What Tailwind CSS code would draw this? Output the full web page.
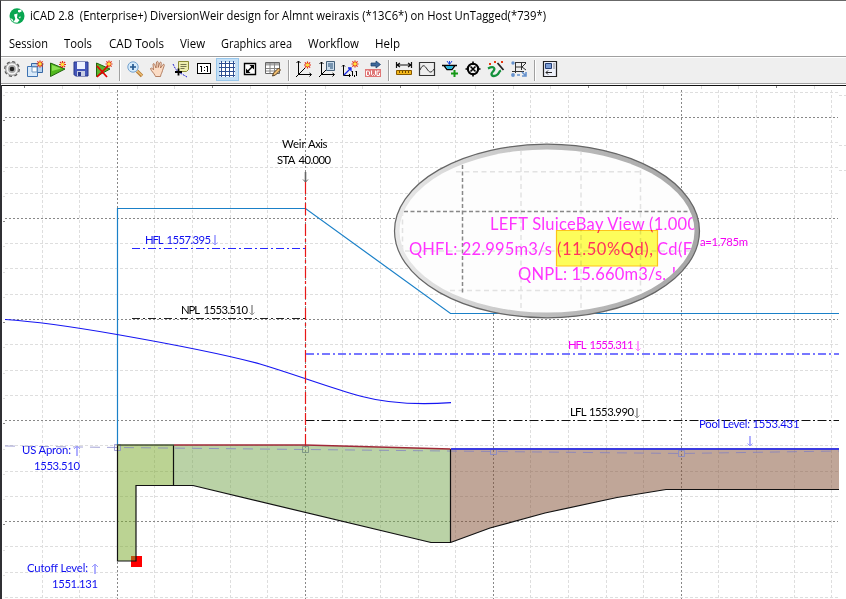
<!DOCTYPE html>
<html lang="en">
<head>
<meta charset="utf-8">
<title>iCAD 2.8</title>
<script src="https://cdn.jsdelivr.net/npm/@tailwindcss/browser@4"></script>
</head>
<body class="w-[846px] h-[599px] overflow-hidden bg-white font-['Open_Sans','Noto_Sans',sans-serif] text-black">
<div class="flex h-[599px] w-[846px] flex-col border-l border-l-[#303034] border-t border-t-[#686868]">
  <header class="flex h-[31px] shrink-0 items-start pl-[8px] pt-[7px]">
    <svg class="h-4 w-4 shrink-0" viewBox="0 0 16 16"><ellipse cx="8" cy="8" rx="7.5" ry="7.8" fill="#08a650"/><path d="M9 2.2l3-.7.8 1.8-2.2 1.2-1.6-.6zM5 6.500l3.500-1-.5 4.500 2.500 2.200-2.200 2.600-4-.6 2-3.200z" fill="#fff"/><path d="M1 10l2.500 1 1.300 2.800-1.600-.6zM9.500 9l2.500-.6-1 2z" fill="#dff5e6"/></svg>
    <h1 class="ml-[5px] text-[12px] leading-4"><svg class="block h-[16px] w-[520px] overflow-visible"><text class="whitespace-pre" x="0" y="12" textLength="516" lengthAdjust="spacingAndGlyphs">iCAD 2.8  (Enterprise+) DiversionWeir design for Almnt weiraxis (*13C6*) on Host UnTagged(*739*)</text></svg></h1>
  </header>
  <nav class="flex h-[24px] shrink-0 items-center pl-[8px] text-[12px]">
    <svg class="block h-[16px] w-[400px] overflow-visible">
      <text x="0" y="12" textLength="39" lengthAdjust="spacingAndGlyphs">Session</text>
      <text x="55" y="12" textLength="28" lengthAdjust="spacingAndGlyphs">Tools</text>
      <text x="100" y="12" textLength="55" lengthAdjust="spacingAndGlyphs">CAD Tools</text>
      <text x="171" y="12" textLength="25" lengthAdjust="spacingAndGlyphs">View</text>
      <text x="212" y="12" textLength="71" lengthAdjust="spacingAndGlyphs">Graphics area</text>
      <text x="299" y="12" textLength="51" lengthAdjust="spacingAndGlyphs">Workflow</text>
      <text x="366" y="12" textLength="25" lengthAdjust="spacingAndGlyphs">Help</text></svg>
  </nav>
  <div class="flex h-[28px] shrink-0 border-b border-t border-[#a0a0a0] bg-[#efefef] pt-px shadow-[inset_0_1px_0_#fff] [&>b]:flex [&>b]:h-[23px] [&>b]:w-[23px] [&>b]:shrink-0 [&>b]:items-start [&>b]:justify-start [&>i]:mx-[3px] [&>i]:mt-[2px] [&>i]:h-[21px] [&>i]:w-[2px] [&>i]:border-l [&>i]:border-r [&>i]:border-l-[#a0a0a0] [&>i]:border-r-white [&_svg]:ml-[3px] [&_svg]:mt-[3px] [&_svg]:h-4 [&_svg]:w-4 [&_svg]:shrink-0 [&_svg]:overflow-visible">
    <b><svg viewBox="0 0 16 16"><circle cx="8" cy="8" r="7.300" fill="none" stroke="#555" stroke-width="1.300" stroke-dasharray="3.200 2.530"/><circle cx="8" cy="8" r="6.300" fill="#f2f2f2" stroke="#707070" stroke-width=".8"/><circle cx="8" cy="8" r="3.900" fill="#aaa"/><circle cx="8" cy="8" r="2.300" fill="#222"/></svg></b>
    <b><svg viewBox="0 0 16 16"><path d="M4.500 2.500h11v9h-11z" fill="#b7d3ef" stroke="#3767a3"/><path d="M.5 5.500h10v10H.5z" fill="#d9eafa" stroke="#3e73b2"/><path d="M5 6h5v5H5z" fill="#fff" stroke="#7298c0"/><use href="#star" x="13" y="3"/></svg></b>
    <b><svg viewBox="0 0 16 16"><path d="M.5 2v13.500L15 8z" fill="#52b81e" stroke="#22650e"/><path d="M2 4v6l9-2.500z" fill="#8de052"/><use href="#star" x="12.500" y="3.500"/></svg></b>
    <b><svg viewBox="0 0 16 16"><path d="M1 1h14v14H2.500L1 13.500z" fill="#4557b9" stroke="#27368b"/><path d="M4 1h8v7H4z" fill="#edf2ff"/><path d="M4 10h8v5H4z" fill="#c9cfe5"/><path d="M5 11h3v4H5z" fill="#27368b"/></svg></b>
    <b><svg viewBox="0 0 16 16"><path d="M.5 2v13.500L14 8z" fill="#5cb32e" stroke="#22650e"/><use href="#star" x="13" y="3"/><path d="M1 5l10 11M12 5L1 16" stroke="#e50000" stroke-width="1.700"/></svg></b>
    <i></i>
    <b><svg viewBox="0 0 16 16"><path d="M10 10l5 5" stroke="#b77b35" stroke-width="3.400"/><path d="M10 10l5 4.500" stroke="#eec178" stroke-width="1.500"/><circle cx="6" cy="6" r="5.200" fill="#d5ebfc" stroke="#74a2ce"/><path d="M3 6h6M6 3v6" stroke="#24588f" stroke-width="1.700"/></svg></b>
    <b><svg viewBox="0 0 16 16"><path d="M5 14.500C4 12 1 10 .5 7.500c1-1 2 0 3 1.300L3 3c1-1 1.700 0 2 1.500L6 7l.5-6c.7-1 1.500-.6 1.700.3V6.500l1.700-5c1-.8 1.600 0 1.400 1L10.500 7l2.500-3.500c1-.6 1.600.2 1.200 1.200L12.500 9.500c-.5 2.500-1.500 3-2 6H5.500z" fill="#fbdcc5" stroke="#a36645" stroke-width=".8"/></svg></b>
    <b><svg viewBox="0 0 16 16"><path d="M5.500.5h10v8l-2 2h-8z" fill="#eeeeae" stroke="#8b8b35"/><path d="M7.500 3.500h6M7.500 5.500h6M7.500 7.500h4" stroke="#777750"/><path d="M0 3l2 4 3 4 4 2 5 3" fill="none" stroke="#22c" stroke-dasharray="2 1"/><path d="M2 11h7M5.500 7.500v7" stroke="#000" stroke-width="1.800"/></svg></b>
    <b><svg viewBox="0 0 16 16" shape-rendering="crispEdges"><path d="M1.500 2.500h13v10h-13z" fill="#fff" stroke="#000"/><path d="M4 5.500h1.500V11M10 5.500h1.500V11M8.500 6v1M8.500 9v1" fill="none" stroke="#000"/></svg></b>
    <b class="bg-[#c4dff5] shadow-[inset_0_0_0_1px_#98c7ec]"><svg viewBox="0 0 16 16" shape-rendering="crispEdges"><path d="M1 1h15v15H1z" fill="#fff"/><path d="M2.500 0v16M6.500 0v16M10.500 0v16M14.500 0v16M0 2.500h16M0 6.500h16M0 10.500h16M0 14.500h16" stroke="#2d4e91"/></svg></b>
    <b><svg viewBox="0 0 16 16"><path d="M2.500 2.500h11v11h-11z" fill="#fff" stroke="#000" stroke-width="1.400"/><path d="M5 11l6-6" stroke="#000" stroke-width="1.500"/><path d="M7.500 4H12v4.500zM4 7.500V12h4.500z"/></svg></b>
    <b><svg viewBox="0 0 16 16"><path d="M.5 1.500h14v11H.5z" fill="#fff" stroke="#666"/><path d="M1 2h13v2.500H1z" fill="#aaa"/><path d="M5 2v10M9.500 2v10M1 7.500h13M1 10h13" stroke="#888"/><path d="M7.500 15l1-3 5-5 2 2-5 5z" fill="#eebd70" stroke="#553d21"/></svg></b>
    <i></i>
    <b><svg viewBox="0 0 16 16"><path d="M2.500 0v13.500H15M.5 2L2.500 0l2 2M13.500 12l2 1.500-2 2M0 16l9-9" fill="none" stroke="#000"/><use href="#star" x="11.500" y="4"/></svg></b>
    <b><svg viewBox="0 0 16 16"><path d="M2.500 1v12.500H15M.5 3l2-2 2 2M13.500 12l2 1.500-2 2M0 16l7-7" fill="none" stroke="#000"/><path d="M7.500.5h8v9h-8z" fill="#cbdceb" stroke="#456078"/><path d="M9 3h5M9 5h5M11 7h3" stroke="#234d75"/></svg></b>
    <b><svg viewBox="0 0 16 16"><path d="M1.500 4v10.500H8M0 5.500L1.500 4 3 5.500M10.500 10v5M9.500 11l1-1M14.500 10v5M13.500 11l1-1M12.500 14v2M7 13l1.500 1.500L7 16" fill="none" stroke="#000"/><path d="M2 14l7-7M6 7h3v3" fill="none" stroke="#1726e7" stroke-width="1.300"/><use href="#star" x="13" y="3"/></svg></b>
    <b><svg viewBox="0 0 16 16"><path d="M6 2h5V0l4.500 3.500L11 7V5H6z" fill="#40699a" stroke="#193e69" stroke-width=".7"/><path d="M0 8h16v8H0z" fill="#df7777"/><path d="M1.500 10v4.500h2l1-1V11l-1-1zM6.500 9.500v4l1 1 1-1 1 1 1-1v-4M14.500 10H12v4.500h2.500V12" fill="none" stroke="#fff"/></svg></b>
    <i></i>
    <b><svg viewBox="0 0 16 16"><path d="M.5 1v6M15.500 1v6M1 4h14M4 2L1 4l3 2M12 2l3 2-3 2" fill="none" stroke="#111" stroke-width="1.200"/><path d="M.5 9.500h15v4H.5z" fill="#f3b719" stroke="#875900"/><path d="M3.500 10v2M6.500 10v2M9.500 10v2M12.500 10v2" stroke="#6f4a00"/></svg></b>
    <b><svg viewBox="0 0 16 16"><path d="M.5 1.500h15v13H.5z" fill="#eee" stroke="#333" stroke-width="1.200"/><path d="M1 9c3-7 5-4 7-1s4 5 7 0" fill="none" stroke="#333"/></svg></b>
    <b><svg viewBox="0 0 16 16"><path d="M0 4.500h15M2 4.500l3 4h5l3-4" fill="none" stroke="#000" stroke-width="1.300"/><path d="M3.500 5h8L9.500 8h-4z" fill="#27b7db"/><path d="M5 0l2.500 3.500L10 0M7.500 0v3" fill="none" stroke="#1944df"/><path d="M12.500 9v7M9 12.500h7" stroke="#159816" stroke-width="2"/></svg></b>
    <b><svg viewBox="0 0 16 16"><circle cx="8" cy="8" r="5.200" fill="#eee" stroke="#000" stroke-width="2"/><path d="M8 .5V4M8 12v3.500M.5 8H4M12 8h3.500M5.500 5.500l5 5M10.500 5.500l-5 5" stroke="#000" stroke-width="1.600"/></svg></b>
    <b><svg viewBox="0 0 16 16"><path d="M0 7.500c6-3 8 0 5 3s-1 5.500 3 4 2-4 5-5" fill="none" stroke="#14913c" stroke-width="2.300"/><path d="M9.500 2l6 7" stroke="#222" stroke-width="1.800"/><path d="M1 2l2 2M3 2L1 4M6 0l2 2M8 0L6 2M13 0l2 2M15 0l-2 2" stroke="#e83710"/></svg></b>
    <b><svg viewBox="0 0 16 16"><path d="M4 1.500h11M4.500 1v11M1 10.500h12M10.500 2v7M5 6h6l4-4M11 6l4 3" fill="none" stroke="#333"/><circle cx="2" cy="2" r="1.700" fill="#6692cd"/><circle cx="2" cy="14" r="1.900" fill="#6692cd"/><path d="M6 14h3M11 11l4 4M15 11v4h-4" stroke="#6692cd" stroke-width="1.600" fill="none"/></svg></b>
    <i></i>
    <b><svg viewBox="0 0 16 16"><path d="M1.500.5h13v15h-13z" fill="#eef1fa" stroke="#222" stroke-width="1.200"/><path d="M3.500 2.500h6v5h-6z" fill="#7b9dd5" stroke="#263f75"/><path d="M11.500 3h1M11.500 5h1M11.500 7h1M4 11.500h6M6 9.500l-2 2 2 2" fill="none" stroke="#222"/></svg></b>
  </div>
  <main class="mt-px h-[514px] shrink-0">
    <svg class="block h-[514px] w-[845px]" viewBox="1 85 845 514" font-family="Lato, 'Open Sans', sans-serif" font-size="11.300">
      <defs>
        <g id="star"><path d="M-3.500 0h7M0-3.500v7M-2.600-2.600l5.200 5.200M2.600-2.600l-5.200 5.200" stroke="#e42b13" stroke-width="1.200"/><circle r="1.700" fill="#ffe23a"/></g>
        <g id="down"><path d="M0 0v10" stroke-width="1.600"/><path d="M-2.500 7.500L0 10l2.500-2.500" fill="none"/></g>
        <g id="up"><path d="M0 0v10" stroke-width="1.600"/><path d="M-3 3L0 0l3 3" fill="none"/></g>
        <linearGradient id="rim"><stop offset="0" stop-color="#e9e9e9"/><stop offset=".5" stop-color="#bdbdbd"/><stop offset="1" stop-color="#a6a6a6"/></linearGradient>
        <clipPath id="lens"><ellipse cx="547" cy="231" rx="147.500" ry="81.500"/></clipPath>
      </defs>
      <path d="M1 85h1v514H1z" fill="#303034"/>
      <path d="M2 85h844v1H2z" fill="#111"/>
      <g id="grid" shape-rendering="crispEdges" fill="none"></g>

      <rect x="131" y="556" width="11" height="11" fill="#f00"/>
      <path d="M117.500 445H173.500V485.500H136V561H117.500z" fill="#77a727" fill-opacity=".5"/>
      <path d="M173.500 445H305L450.500 449V542.500H431L193 485.500H173.500z" fill="#75a54d" fill-opacity=".5"/>
      <path d="M450.500 449H839V489.500H666L617 497.500 545 513 490 528 450.500 542.500z" fill="#814d31" fill-opacity=".5"/>

      <path d="M5 446L117.500 447.500 305.500 449.500 493.500 451.500 681.500 453.500 839 451" fill="none" stroke="#7c7cc4" stroke-opacity=".7" stroke-dasharray="10 7"/>
      <g fill="none" stroke-opacity=".8"><path d="M114.500 444.500h6v6h-6z" stroke="#8888cc"/><path d="M302.500 446.500h6v6h-6z" stroke="#728a80"/><path d="M490.500 448.500h6v6h-6zM678.500 450.500h6v6h-6z" stroke="#8288cc"/></g>
      <path d="M117.500 445V208.500H305.500L450.500 313.500H839" fill="none" stroke="#1a80c8" stroke-width="1.200"/>
      <path d="M5 319.500C45 322 80 328 117 334.500S220 353 260 364C300 376 330 388 362 396.500S425 404.500 451 402.700" fill="none" stroke="#1616f2" stroke-width="1.200"/>
      <path d="M305.500 182V446" stroke="#e81818" stroke-width="1.200" stroke-dasharray="12 3 3 3"/>
      <path d="M132 248.500H305" stroke="#2828ff" stroke-width="1.200" stroke-dasharray="8 3 2 3"/>
      <path d="M132 318.500H305" stroke="#222" stroke-width="1.200" stroke-dasharray="8 3 2 3"/>
      <path d="M306 354H839" stroke="#7777ff" stroke-width="2" stroke-dasharray="8 3 2 3" shape-rendering="crispEdges"/>
      <path d="M306 420.500H839" stroke="#111" stroke-width="1.200" stroke-dasharray="8 3 2 3"/>

      <path d="M117.500 445V561H136V485.500H173.500V445M173.500 485.500H193L431 542.500H450.500V449M450.500 542.500L490 528 545 513 617 497.500 666 489.500H839" fill="none" stroke="#111" stroke-width="1.200"/>
      <path d="M117 445H174" stroke="#465034" stroke-width="1.600"/>
      <path d="M174 445H305L450.500 449" fill="none" stroke="#a02838" stroke-width="1.600"/>
      <path d="M451 449H839" stroke="#3b3be0" stroke-width="2"/>

      <g><text x="282" y="148" textLength="23.500">Weir</text><text x="308" y="148" textLength="19.500">Axis</text>
      <text x="277" y="164" textLength="18.500">STA</text><text x="298.500" y="164" textLength="32.500">40.000</text></g>
      <use href="#down" x="305.500" y="172" stroke="#666"/>
      <g fill="#1010f0">
        <text x="145" y="244" textLength="18.500">HFL</text><text x="166.500" y="244" textLength="44.500">1557.395</text>
        <text x="699" y="428" textLength="100.500">Pool Level: 1553.431</text>
        <text x="22" y="454" textLength="49">US Apron:</text>
        <text x="34" y="470" textLength="46">1553.510</text>
        <text x="27" y="572" textLength="61">Cutoff Level:</text>
        <text x="52" y="588" textLength="46">1551.131</text>
      </g>
      <text x="181" y="314" textLength="19">NPL</text><text x="203.500" y="314" textLength="44.500">1553.510</text>
      <text x="570" y="416" textLength="16.500">LFL</text><text x="589" y="416" textLength="45">1553.990</text>
      <g fill="#f400f4"><text x="568" y="349" textLength="18.500">HFL</text><text x="589.500" y="349" textLength="44">1555.311</text><text x="700" y="246" textLength="48">a=1.785m</text></g>
      <g stroke="#9c9cff"><use href="#down" x="215" y="235"/><use href="#down" x="750" y="436"/><use href="#up" x="77" y="446"/><use href="#up" x="95" y="564"/></g>
      <use href="#down" x="252" y="305" stroke="#999"/><use href="#down" x="637" y="408" stroke="#999"/><use href="#down" x="638" y="341" stroke="#ff88ff"/>

      <ellipse cx="547" cy="231" rx="152.500" ry="86.800" fill="url(#rim)" stroke="#666" stroke-width="1.200"/>
      <ellipse cx="547" cy="231" rx="147.500" ry="81.500" fill="#fdfdfd"/>
      <g clip-path="url(#lens)">
        <path d="M402.500 211V262M521 150V312M581 150V312M640.500 170V291M456 171.700H642M405 251H690M450 290.500H642" stroke="#e2e2e2" stroke-width="1.500" stroke-dasharray="5 3.500"/>
        <path d="M462.500 165V295M404 211.500H691" stroke="#888" stroke-width="1.500" stroke-dasharray="4 2.500"/>
        <g fill="#ff33ff" font-size="16.500">
          <text x="490" y="229.500" textLength="207">LEFT SluiceBay View (1.000</text>
          <text x="409" y="255" textLength="143">QHFL: 22.995m3/s</text>
          <text x="557" y="255" textLength="96">(11.50%Qd),</text>
          <text x="657" y="255" textLength="35">Cd(F</text>
          <text x="518" y="280" textLength="148">QNPL: 15.660m3/s,</text>
          <text x="672" y="280">h</text>
        </g>
      </g>
      <g class="mix-blend-multiply"><path d="M556.500 230.500h101v35.500h-101z" fill="#ffff5c" stroke="#ffc61a" stroke-width="1.200"/></g>
    </svg>
  </main>
</div>
<script>
  // Survey grid: every fifth column and every fourth row is a major line.
  const grid = document.getElementById('grid');
  const line = (d, major) => {
    const p = document.createElementNS('http://www.w3.org/2000/svg', 'path');
    p.setAttribute('d', d);
    p.setAttribute('stroke', major ? '#888' : '#dedede');
    p.setAttribute('stroke-dasharray', major ? '2 2' : '3 2');
    grid.appendChild(p);
  };
  const draw = major => {
    for (let i = -2; i < 20; i++) if ((i % 5 === 0) === major) line(`M${Math.floor(117.3 + i * 37.6) + .5} 90V599`, major);
    for (let j = -1; j < 20; j++) if ((j % 4 === 0) === major) line(`M5 ${Math.floor(117.3 + j * 25.27) + .5}H838`, major);
    for (let i = 0; i < 22; i++) if ((i % 5 === 0) === major) line(`M${Math.floor(24.5 + i * 37.6) + .5} 86V90`, major);
    for (let j = -1; j < 19; j++) if ((j % 4 === 0) === major) line(`M3 ${Math.floor(120.5 + j * 25.27) + .5}H5`, major);
  };
  draw(false);
  draw(true);
  [95.5, 145.5, 170.5].forEach(y => line(`M839 ${y}H846`, false));
</script>
</body>
</html>
